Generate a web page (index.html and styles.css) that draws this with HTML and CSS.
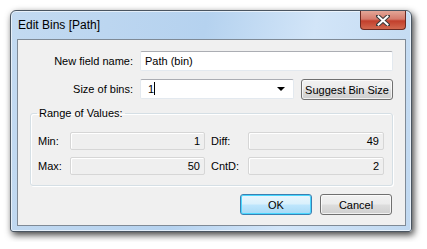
FILE: index.html
```html
<!DOCTYPE html>
<html lang="en">
<head>
  <meta charset="UTF-8" />
  <title>Edit Bins [Path]</title>
  <link rel="stylesheet" href="styles.css">
</head>
<body>

  <div class="window">
    <div class="titlebar">
      <span class="title">Edit Bins [Path]</span>
      <div class="close">
        <svg width="14" height="11" viewBox="0 0 14 11">
          <path d="M2 1 L12 10 M12 1 L2 10" stroke="#3b3b3b" stroke-width="4" stroke-linecap="square" />
          <path d="M2.5 1.5 L11.5 9.5 M11.5 1.5 L2.5 9.5" stroke="#fff" stroke-width="2" stroke-linecap="square" />
        </svg>
      </div>
    </div>

    <div class="client">
      <div class="row">
        <label class="lbl">New field name:</label>
        <div class="textbox wide">Path (bin)</div>
      </div>

      <div class="row">
        <label class="lbl">Size of bins:</label>
        <div class="textbox combo">
          <span class="val">1<span class="caret"></span></span>
          <span class="arrow"></span>
        </div>
        <button class="btn suggest">Suggest Bin Size</button>
      </div>

      <fieldset class="group">
        <legend>Range of Values:</legend>
        <div class="stats">
          <span class="slbl">Min:</span>
          <div class="ro">1</div>
          <span class="slbl">Diff:</span>
          <div class="ro">49</div>
          <span class="slbl">Max:</span>
          <div class="ro">50</div>
          <span class="slbl">CntD:</span>
          <div class="ro">2</div>
        </div>
      </fieldset>

      <div class="actions">
        <button class="btn ok">OK</button>
        <button class="btn">Cancel</button>
      </div>
    </div>
  </div>

</body>
</html>
```

FILE: styles.css
```css
* {
  box-sizing: border-box;
}

body {
  margin: 0;
  padding: 10px;
  background: #fff;
  font-family: 'Liberation Sans', Arial, sans-serif;
  font-size: 11px;
  color: #000;
}

.window {
  width: 402px;
  height: 222px;
  border: 1px solid #4a5561;
  border-radius: 6px 6px 3px 3px;
  background: linear-gradient(100deg, #c3daf1 0%, #b5d2ef 45%, #d2e5f8 70%, #c0d8f0 100%);
  box-shadow: 2px 3px 7px rgba(0, 0, 0, 0.75), inset 0 0 0 1px rgba(255, 255, 255, 0.6);
  display: flex;
  flex-direction: column;
  padding: 0 5px 5px 6px;
}

.titlebar {
  height: 28px;
  flex: none;
  display: flex;
  align-items: flex-start;
  justify-content: space-between;
}

.title {
  font-size: 12px;
  margin: 7px 0 0 1px;
  color: #000;
}

.close {
  width: 46px;
  height: 19px;
  border: 1px solid #6b2a22;
  border-top: none;
  border-radius: 0 0 4px 4px;
  background: linear-gradient(#e3a697 0%, #d57b6c 45%, #c23f2c 55%, #d2684f 100%);
  display: flex;
  align-items: center;
  justify-content: center;
}

.client {
  flex: 1;
  background: #f0f0f0;
  border: 1px solid #7f8a96;
  padding: 11px 12px 0 12px;
}

.row {
  display: flex;
  align-items: center;
  margin-bottom: 8px;
  height: 20px;
}

.lbl {
  width: 103px;
  text-align: right;
  margin-right: 7px;
}

.textbox {
  height: 20px;
  line-height: 18px;
  background: #fff;
  border: 1px solid #e3e9ef;
  border-top-color: #abadb3;
  border-radius: 2px;
  padding: 0 4px;
}

.wide {
  width: 253px;
}

.combo {
  width: 154px;
  display: flex;
  justify-content: space-between;
  align-items: center;
  padding-left: 7px;
}

.caret {
  display: inline-block;
  width: 1px;
  height: 13px;
  background: #000;
  vertical-align: -2px;
}

.arrow {
  width: 0;
  height: 0;
  border-left: 4px solid transparent;
  border-right: 4px solid transparent;
  border-top: 4px solid #000;
  margin-right: 4px;
}

.btn {
  font-family: inherit;
  font-size: 11px;
  color: #000;
  height: 21px;
  border: 1px solid #707070;
  border-radius: 3px;
  background: linear-gradient(#f2f2f2 0%, #ebebeb 48%, #dddddd 52%, #cfcfcf 100%);
  box-shadow: inset 0 0 0 1px rgba(255, 255, 255, 0.7);
  padding: 0;
}

.suggest {
  width: 92px;
  margin-left: 7px;
  margin-top: 1px;
}

.group {
  margin: 8px 0 0 0;
  padding: 13px 8px 10px 7px;
  width: 363px;
  border: 1px solid #d5dfe5;
  border-radius: 3px;
  box-shadow: inset 1px 1px 0 #fff, 1px 1px 0 #fff;
}

.group legend {
  padding: 0 2px;
  margin-left: -1px;
}

.stats {
  display: grid;
  grid-template-columns: 32px 135px 43px 136px;
  row-gap: 7px;
  align-items: center;
}

.stats .slbl:nth-child(3),
.stats .slbl:nth-child(7) {
  padding-left: 6px;
}

.ro {
  height: 18px;
  line-height: 16px;
  text-align: right;
  padding-right: 4px;
  border: 1px solid #d6d6d6;
  border-radius: 2px;
  background: #efefef;
  box-shadow: inset 1px 1px 0 #fff;
}

.actions {
  display: flex;
  justify-content: flex-end;
  gap: 8px;
  margin: 8px 1px 0 0;
}

.actions .btn {
  width: 72px;
}

.ok {
  border-color: #3c7fb1;
  box-shadow: inset 0 0 0 1px #48d7ff;
  background: linear-gradient(#eaf6fd 0%, #d9f0fc 48%, #bee6fd 52%, #a7d9f5 100%);
}
```
